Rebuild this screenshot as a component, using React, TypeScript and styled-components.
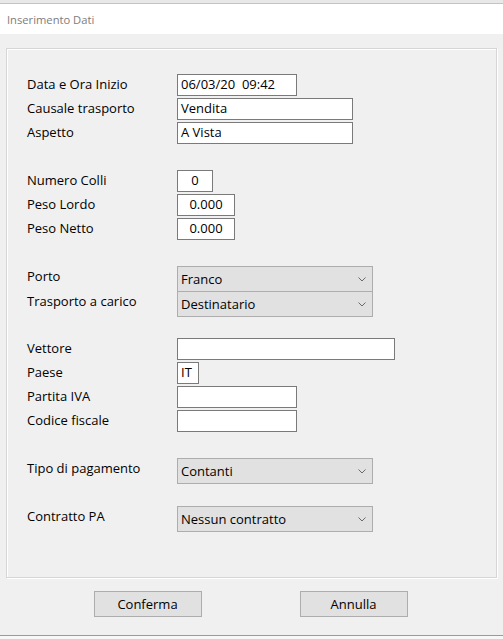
import React from 'react';
import styled, { createGlobalStyle } from 'styled-components';

const GlobalStyle = createGlobalStyle`
  html, body {
    margin: 0;
    padding: 0;
    background: #f0f0f0;
  }

  body {
    font-family: 'Open Sans', 'Liberation Sans', Arial, sans-serif;
  }
`;

const Window = styled.div`
  background: #f0f0f0;
  display: flex;
  flex-direction: column;
  height: 639px;
  overflow: hidden;
  width: 503px;
`;

const TopEdge = styled.div`
  background: #e8e8e8;
  border-bottom: 1px solid #c4c4c4;
  height: 3px;
`;

const TitleBar = styled.div`
  align-items: center;
  background: #ffffff;
  color: #7c7c7c;
  display: flex;
  font-size: 11.2px;
  height: 30px;
  padding-left: 7px;
`;

const Body = styled.div`
  display: flex;
  flex: 1;
  flex-direction: column;
  padding: 14px 6px 0;
`;

const GroupBox = styled.div`
  border: 1px solid #d6d6d6;
  box-shadow: inset 1px 1px 0 #ffffff, 1px 1px 0 #ffffff;
  box-sizing: border-box;
  height: 530px;
  padding: 25px 20px 0;
`;

interface SectionProps {
  $space: number;
}

const Section = styled.div<SectionProps>`
  display: flex;
  flex-direction: column;
  gap: 2px;
  margin-top: ${props => props.$space}px;
`;

const Row = styled.div`
  align-items: start;
  display: grid;
  grid-template-columns: 150px 1fr;
`;

const Label = styled.div`
  color: #000000;
  font-size: 13px;
  line-height: 20px;
  white-space: nowrap;
`;

interface FieldProps {
  $w: number;
  $center?: boolean;
}

const Field = styled.div<FieldProps>`
  background: #ffffff;
  border: 1px solid #7a7a7a;
  box-sizing: border-box;
  color: #000000;
  font-size: 13px;
  height: 22px;
  line-height: 19px;
  padding: 0 3px;
  text-align: ${props => (props.$center ? 'center' : 'left')};
  white-space: pre;
  width: ${props => props.$w}px;
`;

const Combo = styled.div`
  align-items: center;
  background: #e1e1e1;
  border: 1px solid #adadad;
  box-sizing: border-box;
  color: #000000;
  display: flex;
  font-size: 13px;
  height: 26px;
  justify-content: space-between;
  padding: 0 6px 0 3px;
  width: 196px;
`;

const ComboPair = styled.div`
  display: flex;
  flex-direction: column;
  margin-top: ${(props: SectionProps) => props.$space}px;

  > ${Row} + ${Row} {
    margin-top: -1px;
  }
`;

const ButtonBar = styled.div`
  display: flex;
  gap: 98px;
  justify-content: center;
  margin-top: 13px;
  padding-right: 2px;
`;

const Button = styled.div`
  align-items: center;
  background: #e1e1e1;
  border: 1px solid #adadad;
  box-sizing: border-box;
  color: #000000;
  display: flex;
  font-size: 13px;
  height: 26px;
  justify-content: center;
  width: 108px;
`;

const Taskbar = styled.div`
  background: #f7f7f7;
  border-top: 1px solid #9a9a9a;
  height: 3px;
`;

const Chevron = () => (
  <svg width="8" height="5" viewBox="0 0 8 5">
    <polyline points="0.5,0.5 4,4 7.5,0.5" fill="none" stroke="#6a6a6a" strokeWidth="1" />
  </svg>
);

const Select = ({ value }: { value: string }) => (
  <Combo>
    <span>{value}</span>
    <Chevron />
  </Combo>
);

export default function App() {
  return (
    <Window>
      <GlobalStyle />
      <TopEdge />
      <TitleBar>Inserimento Dati</TitleBar>
      <Body>
        <GroupBox>
          <Section $space={0}>
            <Row>
              <Label>Data e Ora Inizio</Label>
              <Field $w={120}>06/03/20  09:42</Field>
            </Row>
            <Row>
              <Label>Causale trasporto</Label>
              <Field $w={176}>Vendita</Field>
            </Row>
            <Row>
              <Label>Aspetto</Label>
              <Field $w={176}>A Vista</Field>
            </Row>
          </Section>

          <Section $space={26}>
            <Row>
              <Label>Numero Colli</Label>
              <Field $w={36} $center>0</Field>
            </Row>
            <Row>
              <Label>Peso Lordo</Label>
              <Field $w={58} $center>0.000</Field>
            </Row>
            <Row>
              <Label>Peso Netto</Label>
              <Field $w={58} $center>0.000</Field>
            </Row>
          </Section>

          <ComboPair $space={26}>
            <Row>
              <Label>Porto</Label>
              <Select value="Franco" />
            </Row>
            <Row>
              <Label>Trasporto a carico</Label>
              <Select value="Destinatario" />
            </Row>
          </ComboPair>

          <Section $space={21}>
            <Row>
              <Label>Vettore</Label>
              <Field $w={218} />
            </Row>
            <Row>
              <Label>Paese</Label>
              <Field $w={22}>IT</Field>
            </Row>
            <Row>
              <Label>Partita IVA</Label>
              <Field $w={120} />
            </Row>
            <Row>
              <Label>Codice fiscale</Label>
              <Field $w={120} />
            </Row>
          </Section>

          <Section $space={26}>
            <Row>
              <Label>Tipo di pagamento</Label>
              <Select value="Contanti" />
            </Row>
          </Section>

          <Section $space={22}>
            <Row>
              <Label>Contratto PA</Label>
              <Select value="Nessun contratto" />
            </Row>
          </Section>
        </GroupBox>

        <ButtonBar>
          <Button>Conferma</Button>
          <Button>Annulla</Button>
        </ButtonBar>
      </Body>
      <Taskbar />
    </Window>
  );
}
